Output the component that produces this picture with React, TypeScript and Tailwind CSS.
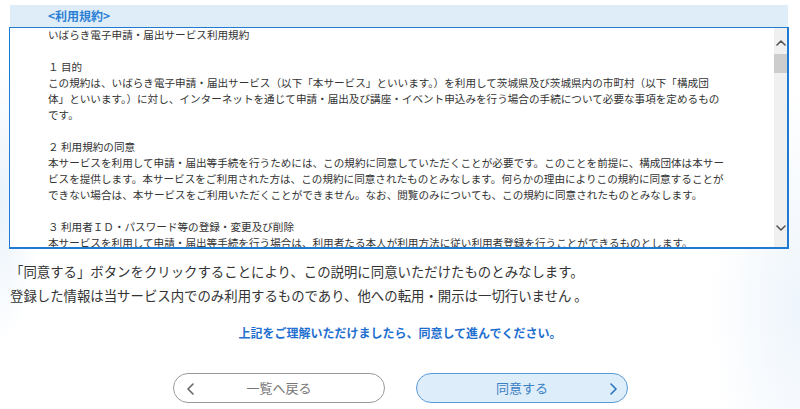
import React from "react";

// 利用規約 agreement page

const terms: string[] = [
  "いばらき電子申請・届出サービス利用規約",
  "",
  "１ 目的",
  "この規約は、いばらき電子申請・届出サービス（以下「本サービス」といいます。）を利用して茨城県及び茨城県内の市町村（以下「構成団",
  "体」といいます。）に対し、インターネットを通じて申請・届出及び講座・イベント申込みを行う場合の手続について必要な事項を定めるもの",
  "です。",
  "",
  "２ 利用規約の同意",
  "本サービスを利用して申請・届出等手続を行うためには、この規約に同意していただくことが必要です。このことを前提に、構成団体は本サー",
  "ビスを提供します。本サービスをご利用された方は、この規約に同意されたものとみなします。何らかの理由によりこの規約に同意することが",
  "できない場合は、本サービスをご利用いただくことができません。なお、閲覧のみについても、この規約に同意されたものとみなします。",
  "",
  "３ 利用者ＩＤ・パスワード等の登録・変更及び削除",
  "本サービスを利用して申請・届出等手続を行う場合は、利用者たる本人が利用方法に従い利用者登録を行うことができるものとします。",
];

function Chevron({ dir, className }: { dir: "left" | "right" | "up" | "down"; className?: string }) {
  const pts = {
    left: "7,1 2,6 7,11",
    right: "2,1 7,6 2,11",
    up: "1,7 5,3 9,7",
    down: "1,3 5,7 9,3",
  }[dir];
  const vb = dir === "left" || dir === "right" ? "0 0 9 12" : "0 0 10 10";
  return (
    <svg viewBox={vb} className={className} fill="none" stroke="currentColor" strokeWidth="1.6" strokeLinecap="round" strokeLinejoin="round">
      <polyline points={pts} />
    </svg>
  );
}

export default function App() {
  return (
    <div
      className="w-[800px] h-[409px] overflow-hidden bg-white bg-[radial-gradient(ellipse_40px_140px_at_0%_50%,#e9f2fb,transparent),radial-gradient(ellipse_90px_220px_at_100%_75%,#eef5fc,transparent)] pt-[5px] text-[#333]"
      style={{ fontFamily: '"Noto Sans CJK JP", "Noto Sans", sans-serif' }}
    >
      {/* header band */}
      <div className="ml-[10px] mr-[12px] h-[22px] bg-[#dfedf9] pl-[38px] flex items-center">
        <span className="text-[12px] font-bold text-[#2b7fd4] leading-none">&lt;利用規約&gt;</span>
      </div>

      {/* terms box */}
      <div className="ml-[9px] mr-[11px] h-[222px] border border-[#1f7ad2] border-r-2 border-b-2 bg-white flex overflow-hidden">
        <div className="flex-1 overflow-hidden pl-[38px] pt-[-1px] -mt-[1px]">
          {terms.map((t, i) => (
            <div key={i} className="h-[16px] leading-[16px] text-[10.6px] whitespace-nowrap">
              {t}
            </div>
          ))}
        </div>
        <div className="w-[13px] bg-[#f0f0f0] flex flex-col items-center">
          <Chevron dir="up" className="w-[10px] h-[10px] mt-[10px] text-[#555]" />
          <div className="w-full h-[19px] bg-[#cdcdcd] mt-[6px]" />
          <div className="flex-1" />
          <Chevron dir="down" className="w-[10px] h-[10px] mb-[14px] text-[#555]" />
        </div>
      </div>

      {/* notes */}
      <div className="mt-[10px] pl-[10px] text-[13.4px] leading-[24px]">
        <p className="whitespace-nowrap">「同意する」ボタンをクリックすることにより、この説明に同意いただけたものとみなします。</p>
        <p className="whitespace-nowrap">登録した情報は当サービス内でのみ利用するものであり、他への転用・開示は一切行いません 。</p>
      </div>

      <p className="mt-[17px] text-center text-[12px] font-bold text-[#1f6fd0] leading-[18px]">
        上記をご理解いただけましたら、同意して進んでください。
      </p>

      {/* buttons */}
      <div className="mt-[31px] flex justify-center gap-[31px] pl-[1px]">
        <button className="relative w-[212px] h-[30px] rounded-full border border-[#9a9a9a] bg-white text-[13px] text-[#777] flex items-center justify-center">
          <Chevron dir="left" className="absolute left-[12px] top-[9px] w-[9px] h-[12px] text-[#666]" />
          一覧へ戻る
        </button>
        <button className="relative w-[212px] h-[30px] rounded-full border border-[#5a9ad6] bg-[#ddedfa] text-[13px] text-[#3a80c4] flex items-center justify-center">
          同意する
          <Chevron dir="right" className="absolute right-[9px] top-[9px] w-[9px] h-[12px] text-[#2a75c0]" />
        </button>
      </div>
    </div>
  );
}
